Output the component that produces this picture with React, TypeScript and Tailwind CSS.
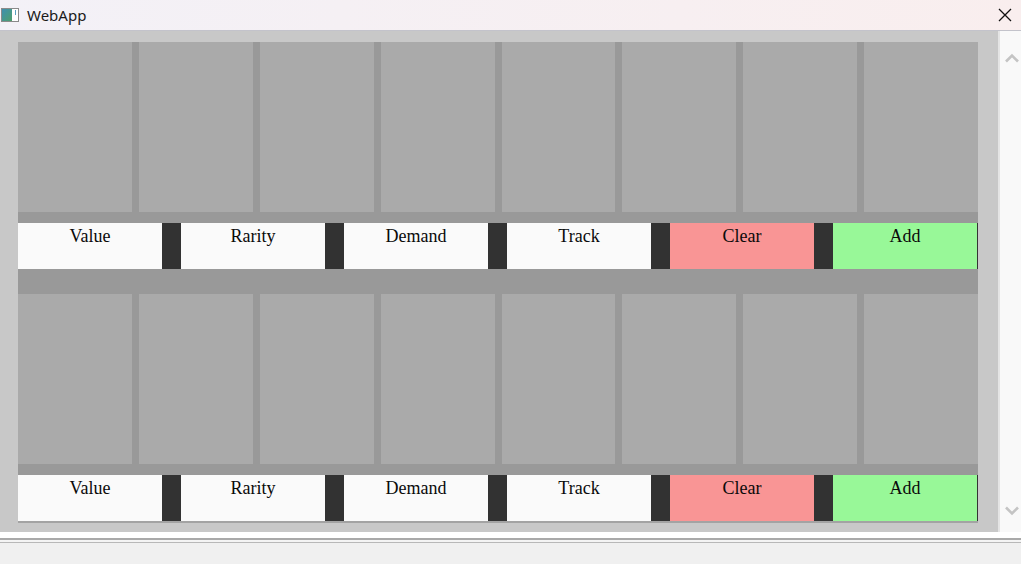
import React from "react";

const labels = ["Value", "Rarity", "Demand", "Track", "Clear", "Add"];

function Section({ last }: { last?: boolean }) {
  return (
    <div className="flex flex-col">
      <div className="grid grid-cols-8 gap-[7px] bg-[#999999] h-[170px]">
        {Array.from({ length: 8 }).map((_, i) => (
          <div key={i} className="bg-[#aaaaaa]" />
        ))}
      </div>
      <div className="h-[11px] bg-[#999999]" />
      <div className={`flex h-[46px] ${last ? "shadow-[0_2px_0_#a3a3a3]" : ""}`}>
        {labels.map((l, i) => {
          const bg =
            l === "Clear" ? "bg-[#f99595]" : l === "Add" ? "bg-[#98f898] border-r border-[#333333]" : "bg-[#fafafa]";
          return (
            <React.Fragment key={l}>
              {i > 0 && <div className="w-[19px] bg-[#323232]" />}
              <div
                className={`flex-1 ${bg} text-center text-[18px] leading-[20px] pt-[3px] text-[#0a0a0a]`}
                style={{ fontFamily: '"Liberation Serif", "DejaVu Serif", serif' }}
              >
                {l}
              </div>
            </React.Fragment>
          );
        })}
      </div>
    </div>
  );
}

export default function App() {
  return (
    <div
      className="w-[1021px] h-[564px] flex flex-col overflow-hidden bg-white"
      style={{ fontFamily: '"Noto Sans", "Open Sans", sans-serif' }}
    >
      {/* Title bar */}
      <div className="h-[30px] flex items-center bg-gradient-to-r from-[#f3f1f7] to-[#f9eeee]">
        <div className="ml-[1px] w-[18px] h-[14px] border border-[#8a8a8a] flex bg-white">
          <div className="w-[10px] h-full bg-gradient-to-br from-[#3f8fb0] to-[#4f9e6a]" />
          <div className="ml-[3px] mt-[1px] w-[1px] h-[5px] bg-[#5aa0c0]" />
        </div>
        <div className="ml-[8px] text-[15px] text-[#1a1a1a] leading-none">WebApp</div>
        <div className="flex-1" />
        <svg width="14" height="14" viewBox="0 0 14 14" className="mr-[9px]">
          <path d="M1 1 L13 13 M13 1 L1 13" stroke="#111" strokeWidth="1.3" />
        </svg>
      </div>
      <div className="h-[1px] bg-[#c3c3cb]" />
      {/* Main */}
      <div className="flex h-[501px]">
        <div className="w-[998px] bg-[#c8c8c8] pl-[18px] pt-[11px]">
          <div className="w-[960px] flex flex-col">
            <Section />
            <div className="h-[25px] bg-[#999999]" />
            <Section last />
          </div>
        </div>
        <div className="w-[2px] bg-[#e4e4e4]" />
        <div className="flex-1 bg-[#f9f9f9] flex flex-col items-center justify-between pt-[22px] pb-[16px] pl-[2px]">
          <svg width="16" height="10" viewBox="0 0 16 10">
            <path d="M2 8.5 L8 2.5 L14 8.5" stroke="#c4c4c4" strokeWidth="2.6" fill="none" />
          </svg>
          <svg width="16" height="10" viewBox="0 0 16 10">
            <path d="M2 1.5 L8 7.5 L14 1.5" stroke="#c4c4c4" strokeWidth="2.6" fill="none" />
          </svg>
        </div>
      </div>
      {/* Bottom */}
      <div className="h-[6px] bg-white" />
      <div className="h-[2px] bg-[#a9a9a9]" />
      <div className="h-[2px] bg-[#f4f4f4]" />
      <div className="h-[1px] bg-[#b8b8b8]" />
      <div className="flex-1 bg-[#f0f0f0]" />
    </div>
  );
}
